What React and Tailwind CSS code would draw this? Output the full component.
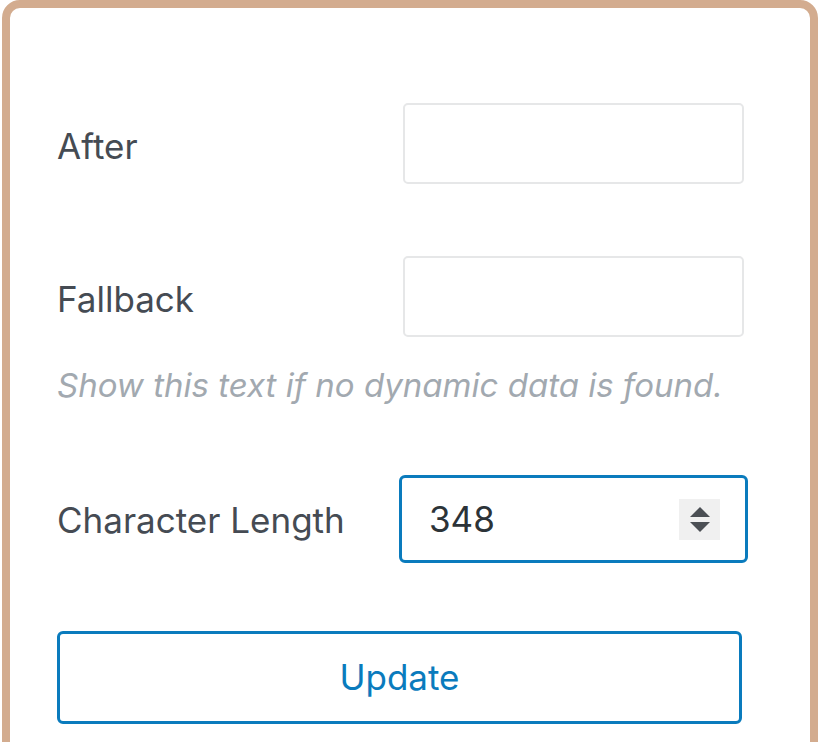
export default function App() {
  return (
    <div className="w-[820px] h-[742px] bg-white overflow-hidden pl-[2px] pr-[2px]">
      <div
        className="h-[760px] border-[8px] border-[#d3ac8f] rounded-t-[18px] bg-white pl-[47px] pr-[60px] pt-[95px]"
        style={{ fontFamily: "Inter, 'Liberation Sans', sans-serif" }}
      >
        <div className="flex items-center">
          <label className="w-[346px] shrink-0 text-[35px] leading-[40px] pt-[4px] text-[#454b53]">After</label>
          <div className="w-[341px] h-[81px] border-2 border-[#e6e7e8] rounded-[5px]" />
        </div>

        <div className="flex items-center mt-[72px]">
          <label className="w-[346px] shrink-0 text-[35px] leading-[40px] pt-[4px] text-[#454b53]">Fallback</label>
          <div className="w-[341px] h-[81px] border-2 border-[#e6e7e8] rounded-[5px]" />
        </div>

        <p className="mt-[28px] text-[33px] italic text-[#a2a9b0] leading-[40px]">
          Show this text if no dynamic data is found.
        </p>

        <div className="flex items-center mt-[70px]">
          <label className="w-[342px] shrink-0 text-[35px] leading-[40px] pt-[2px] text-[#454b53]">Character Length</label>
          <div className="w-[349px] h-[88px] shrink-0 border-[3px] border-[#0a7bbd] rounded-[6px] flex items-center pl-[27px] pr-[25px]">
            <span className="flex-1 text-[35px] text-[#2c3338]">348</span>
            <div className="w-[41px] h-[41px] bg-[#f0f0f0] flex flex-col items-center justify-center gap-[5px]">
              <svg width="20" height="10" viewBox="0 0 20 10">
                <path d="M10 0 L20 10 L0 10 Z" fill="#4b4f54" />
              </svg>
              <svg width="20" height="10" viewBox="0 0 20 10">
                <path d="M0 0 L20 0 L10 10 Z" fill="#4b4f54" />
              </svg>
            </div>
          </div>
        </div>

        <button className="mt-[68px] w-[685px] h-[93px] border-[3px] border-[#0a7bbd] rounded-[6px] text-[35px] text-[#0a7bbd] flex items-center justify-center">
          Update
        </button>
      </div>
    </div>
  );
}
